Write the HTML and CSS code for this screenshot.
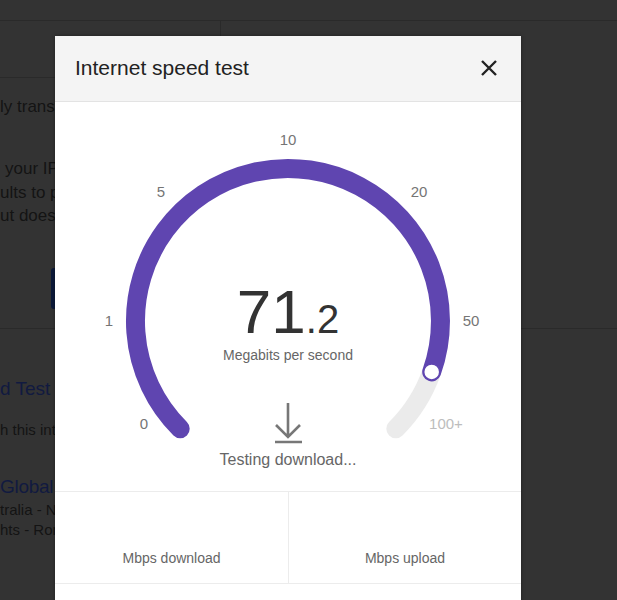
FILE: index.html
```html
<!DOCTYPE html>
<html>
<head>
<meta charset="utf-8">
<link rel="stylesheet" href="styles.css">
</head>
<body>
<div class="page">
  <div class="topbar"></div>
  <div class="searchbox"></div>
  <p class="p1">ly transfers data</p>
  <p class="p2"><span class="ind">your IP address</span><br>ults to provide<br>ut doesn't</p>
  <div class="btn"></div>
  <hr class="rule">
  <a class="link1">d Test</a>
  <p class="p3">h this internet</p>
  <a class="link2">Global</a>
  <p class="p4">tralia - New<br>hts - Rome</p>
</div>

<div class="dialog">
  <div class="head">
    <h1 class="title">Internet speed test</h1>
    <svg class="close" width="18" height="18" viewBox="0 0 18 18"><path d="M2 2 L16 16 M16 2 L2 16" stroke="#222" stroke-width="2.4" fill="none"/></svg>
  </div>
  <div class="gauge">
    <svg width="466" height="389" viewBox="0 0 466 389">
      <path d="M376.7 269.9 A152.5 152.5 0 0 1 340.8 326.8" stroke="#ebebeb" stroke-width="19" fill="none" stroke-linecap="round"/>
      <path d="M125.2 326.8 A152.5 152.5 0 1 1 376.7 269.9" stroke="#5f45b0" stroke-width="19" fill="none" stroke-linecap="round"/>
      <circle cx="376.7" cy="269.9" r="8" fill="#fff" stroke="#5f45b0" stroke-width="1.5"/>
      <g class="lbl">
        <text x="89" y="321">0</text>
        <text x="54" y="218">1</text>
        <text x="106" y="89">5</text>
        <text x="233" y="37">10</text>
        <text x="364" y="89">20</text>
        <text x="416" y="218">50</text>
        <text x="391" y="321" class="dim">100+</text>
      </g>
      <text x="233" y="231" class="num"><tspan class="big">71</tspan><tspan class="small">.2</tspan></text>
      <text x="233" y="258" class="unit">Megabits per second</text>
      <path d="M233 301 V335 M221 323 L233 335 L245 323 M220 340 H247" stroke="#777" stroke-width="2.6" fill="none"/>
      <text x="233" y="363" class="status">Testing download...</text>
    </svg>
  </div>
  <div class="stats">
    <div class="cell">Mbps download</div>
    <div class="cell">Mbps upload</div>
  </div>
</div>
</body>
</html>
```

FILE: styles.css
```css
html, body {
  margin: 0;
  padding: 0;
  background: #333333;
  height: 600px;
  overflow: hidden;
  font-family: "Liberation Sans", Arial, sans-serif;
}
.page {
  color: #141414;
}
.topbar {
  height: 20px;
  border-bottom: 1px solid #2a2a2a;
}
.searchbox {
  width: 220px;
  height: 56px;
  border-right: 1px solid #2a2a2a;
  border-bottom: 1px solid #2a2a2a;
}
.p1 {
  margin: 19px 0 0;
  font-size: 17px;
  line-height: 20px;
}
.p2 {
  margin: 40px 0 0;
  font-size: 17px;
  line-height: 23.5px;
}
.ind { padding-left: 5px; }
.btn {
  margin: 40px 0 0 51px;
  width: 120px;
  height: 41px;
  background: #0c1a3a;
  border-radius: 3px;
}
.rule {
  margin: 19px 0 0;
  border: 0;
  border-top: 1px solid #2a2a2a;
  height: 0;
}
.link1 {
  display: block;
  margin-top: 47px;
  font-size: 19px;
  line-height: 26px;
  color: #111a40;
}
.p3 {
  margin: 18px 0 0;
  font-size: 15px;
  line-height: 20px;
}
.link2 {
  display: block;
  margin-top: 34px;
  font-size: 19px;
  letter-spacing: -0.3px;
  line-height: 26px;
  color: #111a40;
}
.p4 {
  margin: 0;
  font-size: 15px;
  line-height: 20px;
}
.dialog {
  position: absolute;
  left: 55px;
  top: 36px;
  width: 466px;
  height: 600px;
  background: #ffffff;
  box-shadow: 0 0 4px rgba(0,0,0,0.35);
}
.head {
  height: 65px;
  background: #f4f4f4;
  border-bottom: 1px solid #e3e3e3;
  display: flex;
  align-items: center;
  justify-content: space-between;
  padding: 0 23px 0 20px;
}
.title {
  margin: 0 0 2px;
  font-weight: normal;
  font-size: 21px;
  color: #222;
}
.close { display: block; margin-bottom: 2px; }
.gauge svg { display: block; }
.lbl text {
  font-size: 15px;
  fill: #757575;
  text-anchor: middle;
  dominant-baseline: central;
}
.lbl text.dim { fill: #bdbdbd; }
.num { text-anchor: middle; fill: #333; }
.big { font-size: 62px; }
.small { font-size: 40px; }
.unit { text-anchor: middle; font-size: 14px; fill: #666; }
.status { text-anchor: middle; font-size: 16px; fill: #666; }
.stats {
  display: grid;
  grid-template-columns: 233px 1fr;
  border-top: 1px solid #ececec;
  border-bottom: 1px solid #ececec;
}
.cell {
  height: 91px;
  box-sizing: border-box;
  display: flex;
  align-items: flex-end;
  justify-content: center;
  padding-bottom: 17px;
  font-size: 14px;
  color: #666;
}
.cell + .cell { border-left: 1px solid #ececec; }
```
